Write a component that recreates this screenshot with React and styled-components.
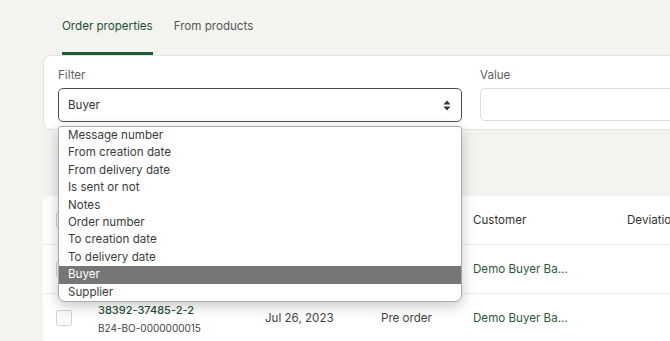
import React from 'react'
import styled, { createGlobalStyle } from 'styled-components'

const GlobalStyle = createGlobalStyle`
  body {
    margin: 0;
    background: #f3f3ef;
    font-family: Inter, "Liberation Sans", sans-serif;
    overflow: hidden;
  }
`

const Page = styled.div`
  width: 760px;
  padding-left: 43px;
  height: 341px;
  overflow: hidden;
`

const Tabs = styled.div`
  display: flex;
  gap: 21px;
  padding-left: 19px;
  height: 55px;
`

const Tab = styled.div`
  display: flex;
  align-items: center;
  font-size: 11.6px;
  color: ${p => (p.active ? '#1f5233' : '#555a55')};
  border-bottom: 3px solid ${p => (p.active ? '#1f5a36' : 'transparent')};
  height: 55px;
  box-sizing: border-box;
`

const FilterCard = styled.div`
  background: #fff;
  border: 1px solid #e2e2de;
  border-radius: 8px;
  padding: 12px 0 8px 14px;
  display: flex;
  gap: 18px;
  height: 75px;
  box-sizing: border-box;
`

const Field = styled.div`
  display: flex;
  flex-direction: column;
  gap: 6px;
  width: ${p => p.width}px;
`

const Label = styled.div`
  font-size: 11.6px;
  color: #5e615e;
  height: 14px;
`

const SelectWrap = styled.div`
  position: relative;
`

const SelectBox = styled.div`
  height: 34px;
  box-sizing: border-box;
  border: 1px solid #4c504c;
  border-radius: 5px;
  display: flex;
  align-items: center;
  justify-content: space-between;
  padding: 0 10px 0 9px;
  font-size: 11.6px;
  color: #333;
`

const ValueBox = styled.div`
  height: 34px;
  box-sizing: border-box;
  border: 1px solid #dcdcd8;
  border-radius: 5px;
`

const Menu = styled.ul`
  position: absolute;
  top: 38px;
  left: 0;
  right: 0;
  margin: 0;
  padding: 0;
  list-style: none;
  background: #fff;
  border: 1px solid #a9a9a9;
  border-radius: 3px 3px 7px 7px;
  box-shadow: 0 4px 14px rgba(0, 0, 0, 0.22);
  z-index: 5;
  overflow: hidden;
`

const Option = styled.li`
  height: 17.4px;
  line-height: 17.4px;
  padding-left: 9px;
  font-size: 11.6px;
  color: ${p => (p.selected ? '#fff' : '#3c3c3c')};
  background: ${p => (p.selected ? '#767676' : 'transparent')};
`

const TableCard = styled.div`
  margin-top: 66px;
  background: #fff;
  border-radius: 8px 0 0 0;
`

const Row = styled.div`
  display: grid;
  grid-template-columns: 55px 167px 116px 92px 154px 1fr;
  align-items: center;
  height: 48px;
  border-top: ${p => (p.first ? 'none' : '1px solid #ececea')};
  font-size: 11.6px;
  color: ${p => (p.head ? '#333' : '#444')};
`

const CheckCell = styled.div`
  padding-left: 13px;
`

const Checkbox = styled.div`
  width: 16px;
  height: 16px;
  border: 1px solid #d6d6d2;
  background: #fafaf8;
  border-radius: 2px;
  box-sizing: border-box;
`

const Cell = styled.div`
  white-space: nowrap;
`

const GreenCell = styled.div`
  color: #2a5a3b;
  white-space: nowrap;
`

const OrderCell = styled.div`
  display: flex;
  flex-direction: column;
  gap: 5px;
`

const OrderNo = styled.div`
  color: #2a5238;
  font-weight: 500;
  font-size: 11px;
`

const OrderRef = styled.div`
  color: #444;
  font-size: 10px;
`

const options = [
  'Message number',
  'From creation date',
  'From delivery date',
  'Is sent or not',
  'Notes',
  'Order number',
  'To creation date',
  'To delivery date',
  'Buyer',
  'Supplier',
]

function Arrows() {
  return (
    <svg width="8" height="11" viewBox="0 0 8 11">
      <path d="M4 0.5 L7.5 4.5 H0.5 Z" fill="#333" />
      <path d="M4 10.5 L7.5 6.5 H0.5 Z" fill="#333" />
    </svg>
  )
}

export default function App() {
  return (
    <Page>
      <GlobalStyle />
      <Tabs>
        <Tab active>Order properties</Tab>
        <Tab>From products</Tab>
      </Tabs>
      <FilterCard>
        <Field width={404}>
          <Label>Filter</Label>
          <SelectWrap>
            <SelectBox>
              Buyer
              <Arrows />
            </SelectBox>
            <Menu>
              {options.map(o => (
                <Option key={o} selected={o === 'Buyer'}>{o}</Option>
              ))}
            </Menu>
          </SelectWrap>
        </Field>
        <Field width={260}>
          <Label>Value</Label>
          <ValueBox />
        </Field>
      </FilterCard>
      <TableCard>
        <Row head first>
          <CheckCell><Checkbox /></CheckCell>
          <Cell />
          <Cell />
          <Cell />
          <Cell>Customer</Cell>
          <Cell>Deviations</Cell>
        </Row>
        <Row>
          <CheckCell><Checkbox /></CheckCell>
          <Cell />
          <Cell />
          <Cell />
          <GreenCell>Demo Buyer Ba...</GreenCell>
          <Cell />
        </Row>
        <Row>
          <CheckCell><Checkbox /></CheckCell>
          <OrderCell>
            <OrderNo>38392-37485-2-2</OrderNo>
            <OrderRef>B24-BO-0000000015</OrderRef>
          </OrderCell>
          <Cell>Jul 26, 2023</Cell>
          <Cell>Pre order</Cell>
          <GreenCell>Demo Buyer Ba...</GreenCell>
          <Cell />
        </Row>
      </TableCard>
    </Page>
  )
}
